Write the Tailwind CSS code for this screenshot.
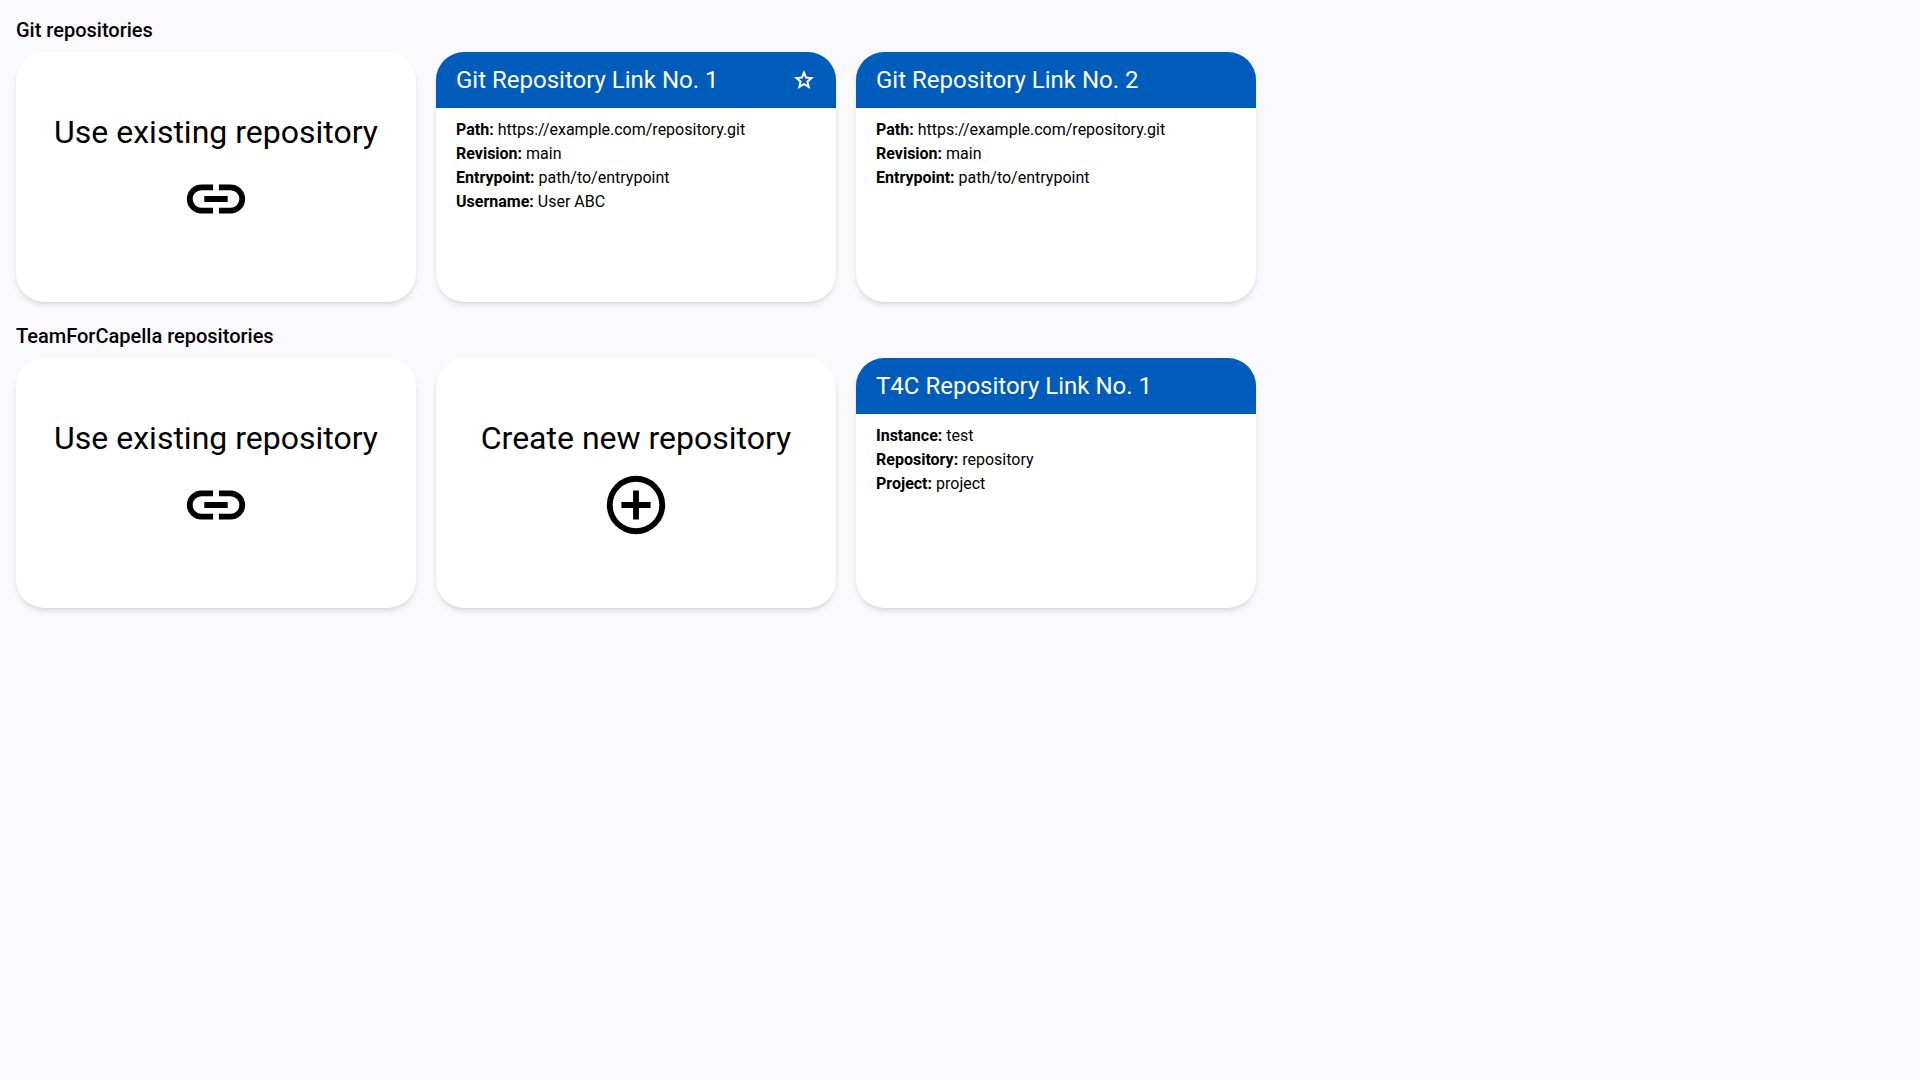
<!DOCTYPE html>
<html lang="en">
<head>
<meta charset="utf-8">
<meta name="viewport" content="width=device-width, initial-scale=1">
<title>Model sources</title>
<script src="https://cdn.jsdelivr.net/npm/@tailwindcss/browser@4"></script>
</head>
<body class="min-h-screen bg-[#faf9fe] font-[Roboto,sans-serif] text-base text-black">
<svg class="hidden" aria-hidden="true">
  <symbol id="link" viewBox="0 0 24 24"><path d="M11 17H7q-2.075 0-3.537-1.463T2 12t1.463-3.537T7 7h4v2H7q-1.25 0-2.125.875T4 12t.875 2.125T7 15h4zm-3-4v-2h8v2zm5 4v-2h4q1.25 0 2.125-.875T20 12t-.875-2.125T17 9h-4V7h4q2.075 0 3.538 1.463T22 12t-1.463 3.538T17 17z"/></symbol>
  <symbol id="add" viewBox="0 0 24 24"><path d="M11 17h2v-4h4v-2h-4V7h-2v4H7v2h4zm1 5a10 10 0 1 1 0-20 10 10 0 0 1 0 20m0-2a8 8 0 1 0 0-16 8 8 0 0 0 0 16"/></symbol>
  <symbol id="star" viewBox="0 0 24 24"><path d="m8.85 16.825 3.15-1.9 3.15 1.925-.825-3.6 2.775-2.4-3.65-.325-1.45-3.4-1.45 3.375-3.65.325 2.775 2.425zM5.825 21l1.625-7.025L2 9.25l7.2-.625L12 2l2.8 6.625 7.2.625-5.45 4.725L18.175 21 12 17.275z"/></symbol>
</svg>
<main class="flex flex-col gap-5 p-4">
  <section>
    <h2 class="mb-2 text-xl leading-7 font-medium">Git repositories</h2>
    <div class="flex flex-wrap gap-5">
      <a href="#" class="flex h-[250px] w-[400px] flex-col items-center justify-center gap-5 rounded-[28px] bg-white shadow-md">
        <span class="text-[32px] leading-6">Use existing repository</span>
        <svg class="size-[70px] fill-current" aria-hidden="true"><use href="#link"/></svg>
      </a>
      <a href="#" class="h-[250px] w-[400px] overflow-hidden rounded-[28px] bg-white shadow-md">
        <div class="flex h-14 items-center justify-between bg-[#005cbb] px-5 text-white">
          <h3 class="text-2xl">Git Repository Link No. 1</h3>
          <svg class="size-6 fill-current" role="img" aria-label="Primary repository"><use href="#star"/></svg>
        </div>
        <div class="px-5 py-[10px] leading-6">
          <p><b>Path:</b> https://example.com/repository.git</p>
          <p><b>Revision:</b> main</p>
          <p><b>Entrypoint:</b> path/to/entrypoint</p>
          <p><b>Username:</b> User ABC</p>
        </div>
      </a>
      <a href="#" class="h-[250px] w-[400px] overflow-hidden rounded-[28px] bg-white shadow-md">
        <div class="flex h-14 items-center justify-between bg-[#005cbb] px-5 text-white">
          <h3 class="text-2xl">Git Repository Link No. 2</h3>
        </div>
        <div class="px-5 py-[10px] leading-6">
          <p><b>Path:</b> https://example.com/repository.git</p>
          <p><b>Revision:</b> main</p>
          <p><b>Entrypoint:</b> path/to/entrypoint</p>
        </div>
      </a>
    </div>
  </section>
  <section>
    <h2 class="mb-2 text-xl leading-7 font-medium">TeamForCapella repositories</h2>
    <div class="flex flex-wrap gap-5">
      <a href="#" class="flex h-[250px] w-[400px] flex-col items-center justify-center gap-5 rounded-[28px] bg-white shadow-md">
        <span class="text-[32px] leading-6">Use existing repository</span>
        <svg class="size-[70px] fill-current" aria-hidden="true"><use href="#link"/></svg>
      </a>
      <a href="#" class="flex h-[250px] w-[400px] flex-col items-center justify-center gap-5 rounded-[28px] bg-white shadow-md">
        <span class="text-[32px] leading-6">Create new repository</span>
        <svg class="size-[70px] fill-current" aria-hidden="true"><use href="#add"/></svg>
      </a>
      <a href="#" class="h-[250px] w-[400px] overflow-hidden rounded-[28px] bg-white shadow-md">
        <div class="flex h-14 items-center justify-between bg-[#005cbb] px-5 text-white">
          <h3 class="text-2xl">T4C Repository Link No. 1</h3>
        </div>
        <div class="px-5 py-[10px] leading-6">
          <p><b>Instance:</b> test</p>
          <p><b>Repository:</b> repository</p>
          <p><b>Project:</b> project</p>
        </div>
      </a>
    </div>
  </section>
</main>
</body>
</html>
